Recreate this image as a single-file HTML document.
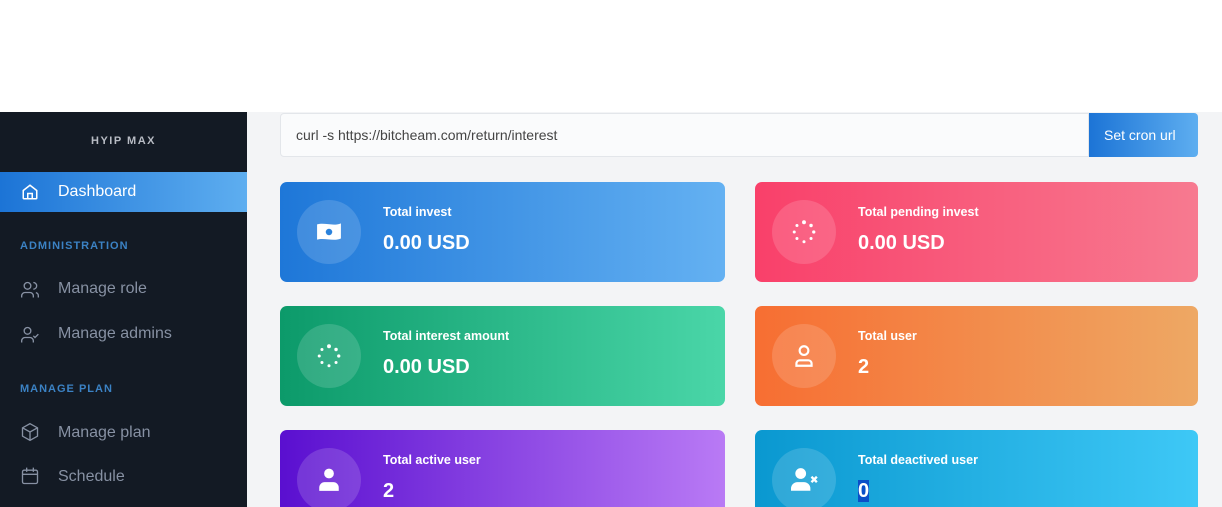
<!DOCTYPE html>
<html><head><meta charset="utf-8"><style>
*{margin:0;padding:0;box-sizing:border-box}
html,body{width:1222px;height:507px;overflow:hidden}
body{background:#fff;font-family:"Liberation Sans",sans-serif;position:relative}
.side{position:absolute;left:0;top:112px;width:247px;height:395px;background:#131a24;overflow:hidden}
.main{position:absolute;left:247px;top:112px;width:975px;height:395px;background:#f3f4f6;overflow:hidden}
.logo{position:absolute;top:23px;left:0;width:247px;text-align:center;color:#b8bcc4;font-weight:bold;font-size:11px;letter-spacing:1.5px}
.active{position:absolute;top:60px;left:0;width:247px;height:40px;background:linear-gradient(90deg,#1c74d6,#5eaef0);color:#fff;font-size:16px}
.item{position:absolute;left:58px;color:#8791a3;font-size:16px}
.sec{position:absolute;left:20px;color:#3b82c4;font-size:11px;font-weight:bold;letter-spacing:1px}
.ic{position:absolute;left:20px}
.inp{position:absolute;left:33px;top:1px;width:809px;height:44px;background:#fafbfc;border:1px solid #e3e6ea;border-radius:4px 0 0 4px;font-size:14px;color:#444;padding:13px 15px}
.btn{position:absolute;left:842px;top:1px;width:109px;height:44px;background:linear-gradient(90deg,#1c74d6,#5eaef0);color:#fff;font-size:14px;padding:14px 0 0 15px;border-radius:0 4px 4px 0}
.card{position:absolute;width:445px;height:100px;border-radius:7px;color:#fff}
.r{width:443px}
.circ{position:absolute;left:17px;top:18px;width:64px;height:64px;border-radius:50%;background:rgba(255,255,255,.15)}
.circ svg{position:absolute;left:19px;top:19px}
.lab{position:absolute;left:103px;top:23px;font-size:12.5px;font-weight:bold}
.val{position:absolute;left:103px;top:50px;font-size:20px;font-weight:bold}
</style></head><body>
<div class="side">
<div class="logo">HYIP MAX</div>
<div class="active">
<svg style="position:absolute;left:21px;top:11px" width="18" height="18" viewBox="0 0 24 24" fill="none" stroke="#fff" stroke-width="2"><path d="M3 10l9-7 9 7v10a1 1 0 0 1-1 1H4a1 1 0 0 1-1-1z"/><path d="M9 21v-7h6v7"/></svg>
<span style="position:absolute;left:58px;top:11px">Dashboard</span></div>
<div class="sec" style="top:128px">ADMINISTRATION</div>
<svg class="ic" style="top:168px" width="20" height="20" viewBox="0 0 24 24" fill="none" stroke="#8791a3" stroke-width="1.6"><circle cx="9" cy="7" r="4"/><path d="M2 21v-2a4 4 0 0 1 4-4h6a4 4 0 0 1 4 4v2M16 3a4 4 0 0 1 0 8M22 21v-2a4 4 0 0 0-3-3.9"/></svg>
<div class="item" style="top:168px">Manage role</div>
<svg class="ic" style="top:213px" width="20" height="20" viewBox="0 0 24 24" fill="none" stroke="#8791a3" stroke-width="1.6"><circle cx="9" cy="7" r="4"/><path d="M2 21v-2a4 4 0 0 1 4-4h6a4 4 0 0 1 4 4v2M16 13l2 2 4-4"/></svg>
<div class="item" style="top:213px">Manage admins</div>
<div class="sec" style="top:271px">MANAGE PLAN</div>
<svg class="ic" style="top:310px" width="20" height="20" viewBox="0 0 24 24" fill="none" stroke="#8791a3" stroke-width="1.6"><path d="M12 2l9 5v10l-9 5-9-5V7z"/><path d="M3 7l9 5 9-5M12 12v10"/></svg>
<div class="item" style="top:312px">Manage plan</div>
<svg class="ic" style="top:354px" width="20" height="20" viewBox="0 0 24 24" fill="none" stroke="#8791a3" stroke-width="1.6"><rect x="3" y="5" width="18" height="16" rx="2"/><path d="M3 10h18M8 2v5M16 2v5"/></svg>
<div class="item" style="top:356px">Schedule</div>
</div>
<div class="main">
<div class="inp">curl -s https://bitcheam.com/return/interest</div>
<div class="btn">Set cron url</div>
<div class="card" style="left:33px;top:70px;background:linear-gradient(90deg,#1e77d8,#64b1f2)"><div class="circ"><svg width="26" height="26" viewBox="0 0 24 24"><path d="M1 5c7-2 15 2 22-1v14c-7 3-15-1-22 1z" fill="#fff"/><circle cx="12" cy="12" r="3" fill="#2a82dc"/></svg></div><div class="lab">Total invest</div><div class="val">0.00 USD</div></div>
<div class="card r" style="left:508px;top:70px;background:linear-gradient(90deg,#f9406a,#f77a90)"><div class="circ"><svg width="26" height="26" viewBox="0 0 24 24" fill="#fff"><circle cx="12" cy="3" r="1.8"/><circle cx="18.5" cy="6" r="1.6"/><circle cx="21" cy="12" r="1.5"/><circle cx="18.5" cy="18" r="1.4"/><circle cx="12" cy="21" r="1.4"/><circle cx="5.5" cy="18" r="1.4"/><circle cx="3" cy="12" r="1.4"/><circle cx="5.5" cy="6" r="1.4"/></svg></div><div class="lab">Total pending invest</div><div class="val">0.00 USD</div></div>
<div class="card" style="left:33px;top:194px;background:linear-gradient(90deg,#0c9a6a,#4ad6a8)"><div class="circ"><svg width="26" height="26" viewBox="0 0 24 24" fill="#fff"><circle cx="12" cy="3" r="1.8"/><circle cx="18.5" cy="6" r="1.6"/><circle cx="21" cy="12" r="1.5"/><circle cx="18.5" cy="18" r="1.4"/><circle cx="12" cy="21" r="1.4"/><circle cx="5.5" cy="18" r="1.4"/><circle cx="3" cy="12" r="1.4"/><circle cx="5.5" cy="6" r="1.4"/></svg></div><div class="lab">Total interest amount</div><div class="val">0.00 USD</div></div>
<div class="card r" style="left:508px;top:194px;background:linear-gradient(90deg,#f76e32,#eea864)"><div class="circ"><svg width="26" height="26" viewBox="0 0 24 24" fill="none" stroke="#fff" stroke-width="2"><circle cx="12" cy="7" r="4"/><path d="M5 21v-2a3 3 0 0 1 3-3h8a3 3 0 0 1 3 3v2z"/></svg></div><div class="lab">Total user</div><div class="val">2</div></div>
<div class="card" style="left:33px;top:318px;background:linear-gradient(90deg,#5a0fd0,#b97af5)"><div class="circ"><svg width="26" height="26" viewBox="0 0 24 24" fill="#fff"><circle cx="12" cy="6" r="4.5"/><path d="M3 22v-3a5 5 0 0 1 5-5h8a5 5 0 0 1 5 5v3z"/></svg></div><div class="lab">Total active user</div><div class="val">2</div></div>
<div class="card r" style="left:508px;top:318px;background:linear-gradient(90deg,#0a98d0,#3ec8f6)"><div class="circ"><svg width="28" height="26" viewBox="0 0 26 24" fill="#fff"><circle cx="9" cy="6" r="5"/><path d="M0 22v-2a6 6 0 0 1 6-6h6a6 6 0 0 1 6 6v2z"/><path d="M19 9l5 5M24 9l-5 5" stroke="#fff" stroke-width="2.2"/></svg></div><div class="lab">Total deactived user</div><div class="val"><span style="background:#0a4fc8">0</span></div></div>
</div>
</body></html>
